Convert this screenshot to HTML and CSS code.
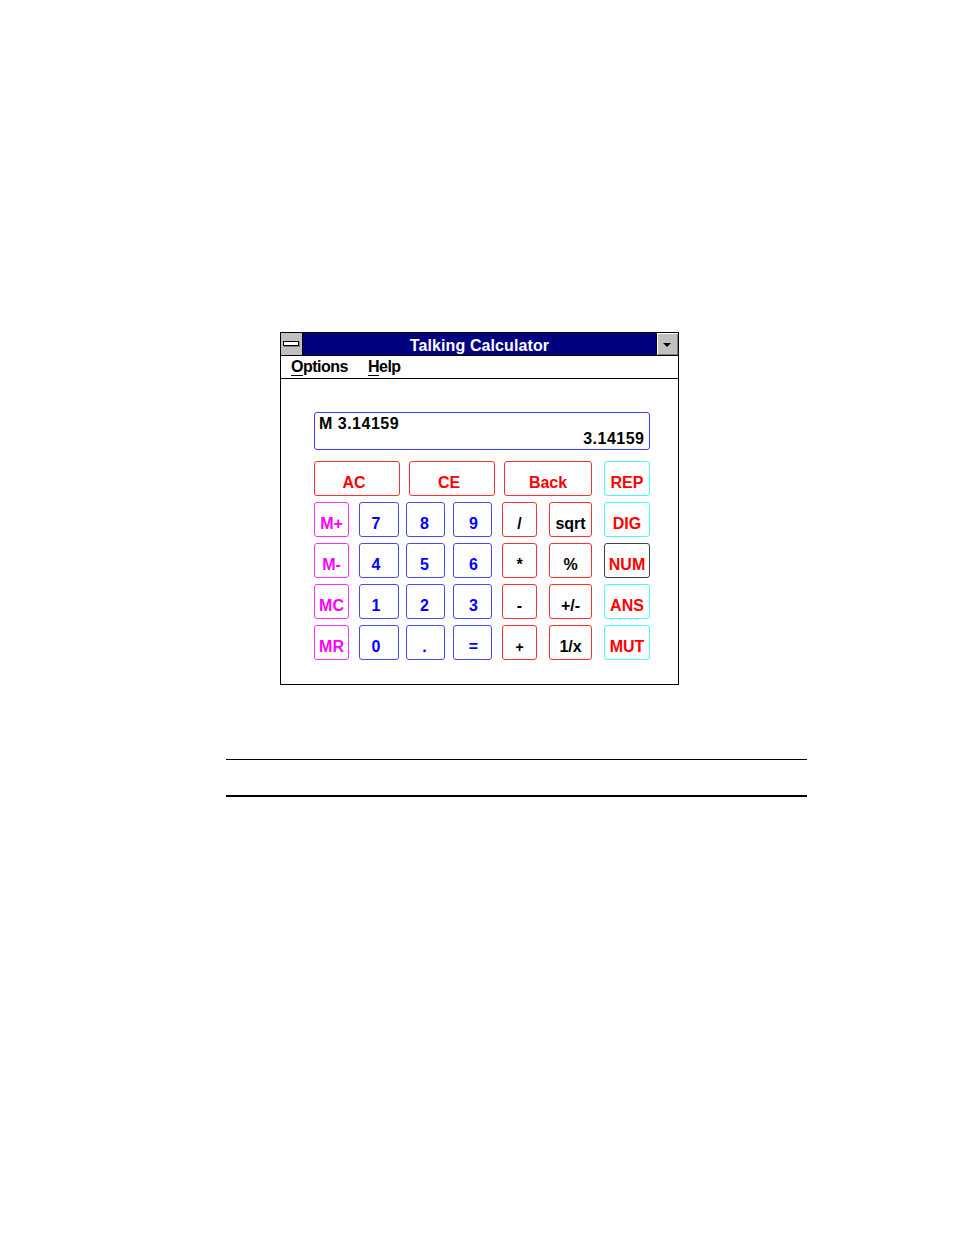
FILE: index.html
```html
<!DOCTYPE html>
<html>
<head>
<meta charset="utf-8">
<title>Talking Calculator</title>
<link rel="stylesheet" href="styles.css">
</head>
<body>
<div class="page">
  <div class="win">
    <div class="titlebar">
      <div class="sysbox"><span class="sysbar"></span></div>
      <div class="title">Talking Calculator</div>
      <div class="dropbox"><span class="tri"></span></div>
    </div>
    <div class="menubar">
      <span class="menu m-opt"><u>O</u>ptions</span>
      <span class="menu m-help"><u>H</u>elp</span>
    </div>
    <div class="client">
      <div class="display">
        <div class="line-mem">M 3.14159</div>
        <div class="line-val">3.14159</div>
      </div>
      <div class="row row1">
        <div class="key red w86 lft">AC</div>
        <div class="key red w86 g9 lft">CE</div>
        <div class="key red w88 g9">Back</div>
        <div class="key cyan w46 g12">REP</div>
      </div>
      <div class="row">
        <div class="key mag c1">M+</div>
        <div class="key blue c2">7</div>
        <div class="key blue c3">8</div>
        <div class="key blue c4">9</div>
        <div class="key op c5">/</div>
        <div class="key op c6">sqrt</div>
        <div class="key cyan c7">DIG</div>
      </div>
      <div class="row">
        <div class="key mag c1">M-</div>
        <div class="key blue c2">4</div>
        <div class="key blue c3">5</div>
        <div class="key blue c4">6</div>
        <div class="key op c5">*</div>
        <div class="key op c6">%</div>
        <div class="key dark c7">NUM</div>
      </div>
      <div class="row">
        <div class="key mag c1">MC</div>
        <div class="key blue c2">1</div>
        <div class="key blue c3">2</div>
        <div class="key blue c4">3</div>
        <div class="key op c5">-</div>
        <div class="key op c6">+/-</div>
        <div class="key cyan c7">ANS</div>
      </div>
      <div class="row">
        <div class="key mag c1">MR</div>
        <div class="key blue c2">0</div>
        <div class="key blue c3">.</div>
        <div class="key blue c4">=</div>
        <div class="key op c5 small">+</div>
        <div class="key op c6">1/x</div>
        <div class="key cyan c7">MUT</div>
      </div>
    </div>
  </div>
  <div class="rules">
    <div class="rule-thin"></div>
    <div class="rule-thick"></div>
  </div>
</div>
</body>
</html>
```

FILE: styles.css
```css
html, body {
  margin: 0;
  padding: 0;
  background: #ffffff;
}
body {
  width: 954px;
  height: 1235px;
  font-family: "Liberation Sans", Arial, sans-serif;
  font-weight: bold;
  font-size: 16px;
}
.page {
  padding-top: 332px;
}
.win {
  margin-left: 280px;
  width: 397px;
  border: 1px solid #000;
  background: #fff;
}
.titlebar {
  display: flex;
  height: 22px;
  border-bottom: 1px solid #000;
}
.sysbox {
  width: 21px;
  background: #c0c0c0;
  border-right: 1px solid #000;
  position: relative;
}
.sysbar {
  position: absolute;
  left: 2px;
  top: 8px;
  width: 14px;
  height: 3px;
  background: #fff;
  border: 1px solid #000;
  box-shadow: 1px 1px 0 #808080;
}
.title {
  flex: 1;
  background: #000080;
  color: #fff;
  text-align: center;
  line-height: 22px;
  padding-top: 2px;
  box-sizing: border-box;
  font-size: 16px;
  letter-spacing: 0.1px;
}
.dropbox {
  width: 21px;
  background: #c0c0c0;
  border-left: 1px solid #000;
  box-shadow: inset 1px 1px 0 #fff, inset -1px -1px 0 #808080;
  position: relative;
}
.tri {
  position: absolute;
  left: 6px;
  top: 10px;
  width: 0;
  height: 0;
  border-left: 4px solid transparent;
  border-right: 4px solid transparent;
  border-top: 4px solid #000;
}
.menubar {
  display: flex;
  height: 22px;
  border-bottom: 1px solid #000;
  line-height: 22px;
  letter-spacing: -0.5px;
  color: #000;
}
.menu u {
  text-decoration: underline;
  text-underline-offset: 3px;
}
.m-opt {
  margin-left: 10px;
}
.m-help {
  margin-left: 20px;
}
.client {
  height: 305px;
  box-sizing: border-box;
  padding: 33px 0 0 33px;
}
.display {
  width: 336px;
  height: 38px;
  box-sizing: border-box;
  border: 1px solid #3c3cff;
  border-radius: 3px;
  padding: 3px 5px 0 4px;
  line-height: 15px;
  letter-spacing: 0.5px;
  color: #000;
}
.line-val {
  text-align: right;
  margin-right: -0.5px;
}
.row {
  display: flex;
  margin-top: 6px;
}
.row1 {
  margin-top: 11px;
}
.key {
  height: 35px;
  box-sizing: border-box;
  border: 1px solid #000;
  border-radius: 3px;
  display: flex;
  align-items: center;
  justify-content: center;
  padding-top: 8px;
  line-height: 18px;
}
.red { border-color: #ff3030; color: #ff0000; }
.cyan { border-color: #40ffff; color: #ff0000; }
.mag { border-color: #ff30ff; color: #ff00ff; }
.blue { border-color: #4848ff; color: #0000ff; }
.op { border-color: #ff3030; color: #000; }
.dark { border-color: #404040; color: #ff0000; }
.small { font-size: 14px; }
.lft { padding-right: 6px; }
.w86 { width: 86px; }
.w88 { width: 88px; }
.w46 { width: 46px; }
.g9 { margin-left: 9px; }
.g12 { margin-left: 12px; }
.c1 { width: 35px; }
.c2 { width: 40px; margin-left: 10px; padding-right: 6px; }
.c3 { width: 39px; margin-left: 7px; padding-right: 2px; }
.c4 { width: 39px; margin-left: 8px; padding-left: 2px; }
.c5 { width: 35px; margin-left: 10px; }
.c6 { width: 43px; margin-left: 12px; }
.c7 { width: 46px; margin-left: 12px; }
.rules {
  margin-left: 226px;
  width: 581px;
  padding-top: 74px;
}
.rule-thin {
  height: 1px;
  background: #000;
}
.rule-thick {
  margin-top: 35px;
  height: 2px;
  background: #000;
}
```
